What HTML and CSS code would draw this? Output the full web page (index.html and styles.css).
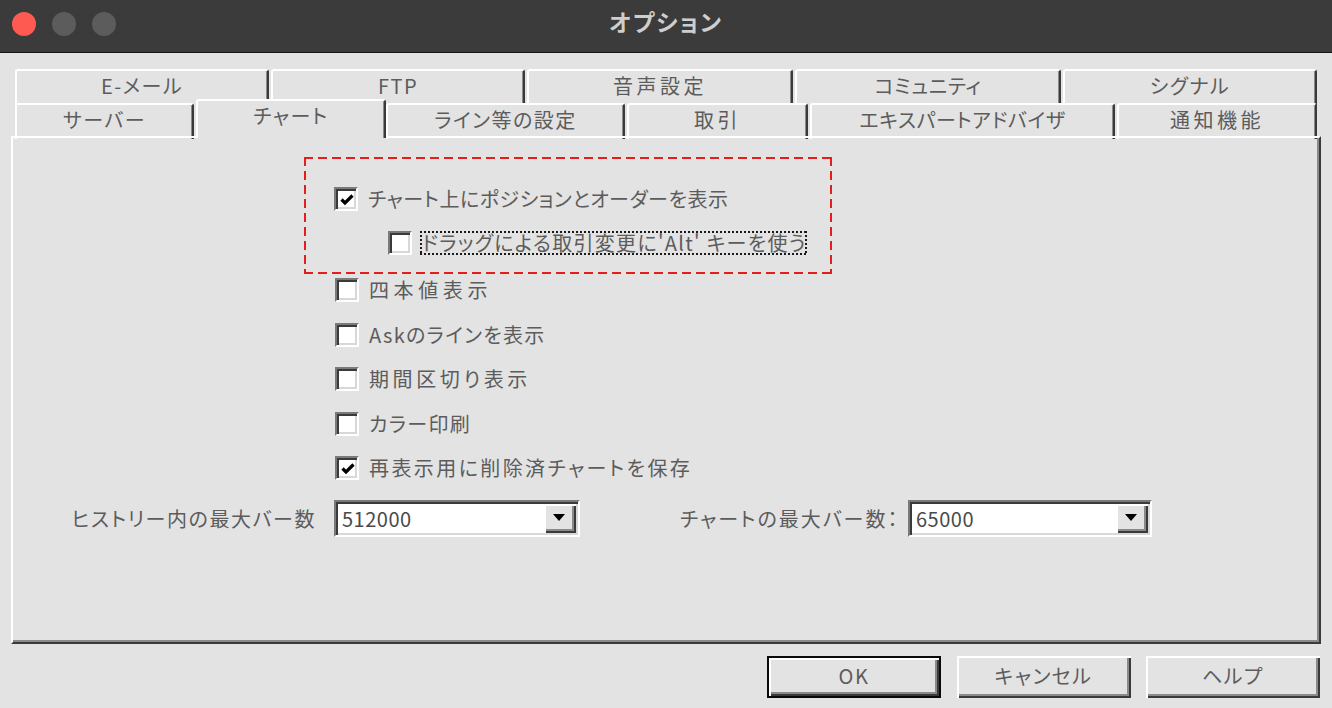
FILE: index.html
```html
<!DOCTYPE html>
<html lang="ja">
<head>
<meta charset="utf-8">
<title>オプション</title>
<link rel="stylesheet" href="styles.css">
</head>
<body>
<div class="window">
  <header class="titlebar">
    <div class="lights">
      <span class="light red"></span>
      <span class="light"></span>
      <span class="light"></span>
    </div>
    <div class="title">オプション</div>
    <div class="spacer"></div>
  </header>

  <main class="dialog">
    <div class="tabs">
      <div class="tabrow row1">
        <div class="tab">E-メール</div>
        <div class="tab">FTP</div>
        <div class="tab wide">音声設定</div>
        <div class="tab tight">コミュニティ</div>
        <div class="tab">シグナル</div>
      </div>
      <div class="tabrow row2">
        <div class="tab">サーバー</div>
        <div class="tab active">チャート</div>
        <div class="tab">ライン等の設定</div>
        <div class="tab wide">取引</div>
        <div class="tab tight">エキスパートアドバイザ</div>
        <div class="tab wide">通知機能</div>
      </div>
    </div>

    <section class="panel">
      <div class="options">
        <div class="highlight">
          <label class="check tight">
            <span class="box"><svg class="tick" viewBox="0 0 16 16" width="16" height="16"><path d="M2.5 7.5 L6 11 L13.5 3.5" fill="none" stroke="#000" stroke-width="3.2"/></svg></span>
            <span class="txt">チャート上にポジションとオーダーを表示</span>
          </label>
          <label class="check sub mid">
            <span class="box"></span>
            <span class="txt focus">ドラッグによる取引変更に'Alt' キーを使う</span>
          </label>
        </div>
        <div class="plain-list">
          <label class="check wide"><span class="box"></span><span class="txt">四本値表示</span></label>
          <label class="check mid"><span class="box"></span><span class="txt">Askのラインを表示</span></label>
          <label class="check semi"><span class="box"></span><span class="txt">期間区切り表示</span></label>
          <label class="check mid"><span class="box"></span><span class="txt">カラー印刷</span></label>
          <label class="check">
            <span class="box"><svg class="tick" viewBox="0 0 16 16" width="16" height="16"><path d="M2.5 7.5 L6 11 L13.5 3.5" fill="none" stroke="#000" stroke-width="3.2"/></svg></span>
            <span class="txt">再表示用に削除済チャートを保存</span>
          </label>
        </div>
      </div>

      <div class="combos">
        <span class="combo-label lbl1">ヒストリー内の最大バー数</span>
        <div class="combo c1">
          <span class="value">512000</span>
          <span class="drop"><svg viewBox="0 0 12 7" width="12" height="7"><polygon points="0,0 12,0 6,7" fill="#000"/></svg></span>
        </div>
        <span class="combo-label lbl2">チャートの最大バー数：</span>
        <div class="combo c2">
          <span class="value">65000</span>
          <span class="drop"><svg viewBox="0 0 12 7" width="12" height="7"><polygon points="0,0 12,0 6,7" fill="#000"/></svg></span>
        </div>
      </div>
    </section>

    <footer class="buttons">
      <button class="btn default">OK</button>
      <button class="btn">キャンセル</button>
      <button class="btn">ヘルプ</button>
    </footer>
  </main>
</div>
</body>
</html>
```
FILE: styles.css
```css
* { box-sizing: border-box; }
html, body { margin: 0; padding: 0; }
body {
  width: 1332px;
  height: 708px;
  overflow: hidden;
  background: #e3e3e3;
  font-family: "Noto Sans CJK JP", "Noto Sans", sans-serif;
  color: #5c5c5c;
}
.window { display: flex; flex-direction: column; height: 708px; }

/* title bar */
.titlebar {
  height: 53px;
  flex: none;
  background: #3b3b3b;
  border-bottom: 1px solid #151515;
  display: grid;
  grid-template-columns: 1fr auto 1fr;
  align-items: start;
}
.lights { display: flex; gap: 16px; padding: 12px 0 0 12px; }
.light { width: 24px; height: 24px; border-radius: 50%; background: #5c5c5c; }
.light.red { background: #fe5a52; }
.title {
  padding-top: 7px;
  line-height: 28px;
  font-size: 23px;
  font-weight: 700;
  color: #cecece;
  letter-spacing: 2px;
  font-feature-settings: "palt";
}

/* dialog */
.dialog { flex: 1; padding: 16px 11px 0 11px; display: flex; flex-direction: column; }
.tabs { margin: 0 4px; display: flex; flex-direction: column; gap: 2px; }
.tabrow { display: grid; }
.row1 { grid-template-columns: 256px 256px 268px 268px 254px; height: 32px; }
.row2 { grid-template-columns: 181px 190px 241px 183px 307px 200px; height: 33px; }
.tab {
  margin-right: 2px;
  height: 100%;
  border-top: 2px solid #fff;
  border-left: 2px solid #fff;
  border-right: 2px solid #3a3a3a;
  box-shadow: inset -1px 0 0 #8a8a8a;
  border-radius: 3px 3px 0 0;
  display: flex;
  align-items: center;
  justify-content: center;
  padding-bottom: 5px;
  font-size: 20px;
  letter-spacing: 1.5px;
  font-feature-settings: "palt";
  white-space: nowrap;
  background: #e3e3e3;
}
.tab.wide { letter-spacing: 3.5px; }
.tab.tight { letter-spacing: 0.6px; }
.tab:last-child { margin-right: 0; }
.tab.active {
  height: 39px;
  margin: -4px 0 -2px 0;
  position: relative;
  z-index: 1;
  padding-bottom: 8px;
}

/* panel */
.panel {
  height: 508px;
  flex: none;
  border: 2px solid;
  border-color: #fff #3a3a3a #3a3a3a #fff;
  box-shadow: inset -2px -2px 0 #8a8a8a;
  padding-top: 19px;
  display: flex;
  flex-direction: column;
}
.options { margin-left: 291px; display: flex; flex-direction: column; }
.highlight {
  width: 528px;
  padding: 30px 0 19px 30px;
  display: flex;
  flex-direction: column;
  gap: 20px;
  background:
    repeating-linear-gradient(90deg, #e41e1b 0 9px, transparent 9px 14px) top left / 100% 2px no-repeat,
    repeating-linear-gradient(90deg, #e41e1b 0 9px, transparent 9px 14px) bottom left / 100% 2px no-repeat,
    repeating-linear-gradient(180deg, #e41e1b 0 9px, transparent 9px 14px) top left / 2px 100% no-repeat,
    repeating-linear-gradient(180deg, #e41e1b 0 9px, transparent 9px 14px) top right / 2px 100% no-repeat;
}
.check {
  display: flex;
  align-items: center;
  gap: 10px;
  height: 24px;
  font-size: 20px;
  line-height: 24px;
  letter-spacing: 2.4px;
  font-feature-settings: "palt";
  white-space: nowrap;
}
.check.wide { letter-spacing: 4.6px; }
.check.semi { letter-spacing: 3.6px; }
.check.mid { letter-spacing: 1.3px; }
.check.tight { letter-spacing: 0.5px; }
.check.sub { margin-left: 54px; gap: 8px; }
.plain-list { display: flex; flex-direction: column; gap: 20.5px; margin-top: 4px; padding-left: 31px; }
.box {
  width: 24px;
  height: 24px;
  flex: none;
  background: #fff;
  border: 2px solid;
  border-color: #7a7a7a #fff #fff #7a7a7a;
  box-shadow: inset 2px 2px 0 #3a3a3a, inset -2px -2px 0 #d8d8d8;
  display: flex;
  align-items: center;
  justify-content: center;
}
.tick { display: block; margin: 1px 0 0 1px; }
.focus {
  padding: 1px 0 1px 2px;
  line-height: 22px;
  background:
    repeating-linear-gradient(90deg, #1a1a1a 0 2px, transparent 2px 4px) top left / 100% 2px no-repeat,
    repeating-linear-gradient(90deg, #1a1a1a 0 2px, transparent 2px 4px) bottom left / 100% 2px no-repeat,
    repeating-linear-gradient(180deg, #1a1a1a 0 2px, transparent 2px 4px) top left / 2px 100% no-repeat,
    repeating-linear-gradient(180deg, #1a1a1a 0 2px, transparent 2px 4px) top right / 2px 100% no-repeat;
}

/* combos */
.combos { display: flex; align-items: center; margin-top: 20px; }
.combo-label {
  font-size: 20px;
  letter-spacing: 2px;
  font-feature-settings: "palt";
  white-space: nowrap;
}
.lbl1 { width: 303px; text-align: right; margin-right: 18px; letter-spacing: 1.6px; }
.lbl2 { width: 228px; margin-left: 100px; }
.combo {
  height: 37px;
  background: #fff;
  border: 2px solid;
  border-color: #7a7a7a #fff #fff #7a7a7a;
  box-shadow: inset 2px 2px 0 #3a3a3a, inset -2px -2px 0 #d8d8d8;
  padding: 2px 2px 2px 6px;
  display: flex;
  align-items: center;
  justify-content: space-between;
}
.c1 { width: 246px; }
.c2 { width: 244px; }
.value { font-size: 20px; color: #4a4a4a; letter-spacing: 0.5px; }
.drop {
  width: 32px;
  height: 29px;
  background: #e3e3e3;
  box-shadow: inset 2px 2px 0 #fff, inset -2px -2px 0 #3a3a3a, inset -4px -4px 0 #8a8a8a;
  display: flex;
  align-items: center;
  justify-content: center;
  padding: 0 2px 2px 0;
}
.drop svg { display: block; }

/* buttons */
.buttons { display: flex; justify-content: flex-end; gap: 15.5px; margin-top: 12px; padding-right: 1px; }
.btn {
  width: 174px;
  height: 42px;
  border: none;
  background: #e3e3e3;
  box-shadow: inset 2px 2px 0 #fff, inset -2px -2px 0 #3a3a3a, inset -4px -4px 0 #8a8a8a;
  font-family: "Noto Sans CJK JP", "Noto Sans", sans-serif;
  font-size: 20px;
  letter-spacing: 1.5px;
  font-feature-settings: "palt";
  color: #5c5c5c;
  padding: 0 0 4px 0;
}
.btn.default { border: 2px solid #0a0a0a; }
```
